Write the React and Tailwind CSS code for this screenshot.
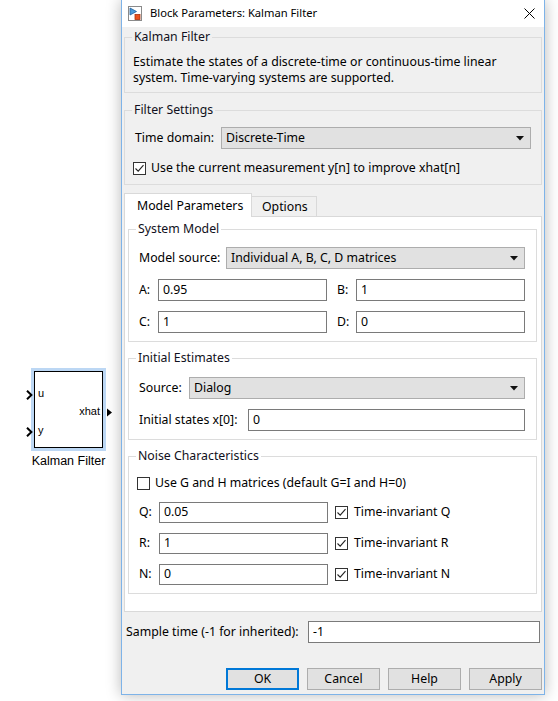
import React from "react";

function Group({ title, className = "", inner = "", children }) {
  return (
    <fieldset className={`border border-[#dcdcdc] ${className}`}>
      <legend className="ml-[7px] px-[2px] leading-[16px] text-[#101020]">{title}</legend>
      <div className={inner}>{children}</div>
    </fieldset>
  );
}

function Checkbox({ checked }) {
  return (
    <span className="w-[13px] h-[13px] shrink-0 border border-[#333] bg-white flex items-center justify-center">
      {checked && (
        <svg width="11" height="11" viewBox="0 0 11 11">
          <path d="M1.5 5.5 L4.2 8.2 L9.5 2.2" fill="none" stroke="#222" strokeWidth="1.1" />
        </svg>
      )}
    </span>
  );
}

function Select({ value, className }) {
  return (
    <div className={`h-[22px] bg-[#e1e1e1] border border-[#adadad] flex items-center pl-[4px] pr-[6px] ${className}`}>
      <span className="flex-1">{value}</span>
      <svg width="8" height="5" viewBox="0 0 8 5">
        <path d="M0 0 L8 0 L4 4.5 Z" fill="#111" />
      </svg>
    </div>
  );
}

function Input({ value, className }) {
  return (
    <div className={`h-[22px] bg-white border border-[#7a7a7a] flex items-center px-[4px] ${className}`}>
      {value}
    </div>
  );
}

function Field({ label, value, labelW = "w-[19px]" }) {
  return (
    <div className="flex items-center">
      <span className={`${labelW} shrink-0 whitespace-nowrap`}>{label}</span>
      <Input value={value} className="flex-1" />
    </div>
  );
}

function NoiseRow({ label, value, inv, className = "" }) {
  return (
    <div className={`flex items-center ${className}`}>
      <span className="w-[20px] shrink-0">{label}</span>
      <Input value={value} className="w-[169px] !h-[21px]" />
      <span className="ml-[7px] mr-[6px]">
        <Checkbox checked />
      </span>
      <span>Time-invariant {inv}</span>
    </div>
  );
}

function Button({ children, primary }) {
  return (
    <button
      className={`w-[73px] h-[22px] bg-[#e1e1e1] flex items-center justify-center ${
        primary ? "border-2 border-[#0078d7]" : "border border-[#adadad]"
      }`}
    >
      {children}
    </button>
  );
}

function SimBlock() {
  return (
    <div className="pt-[368px] pl-[31px] font-['Liberation_Sans',Arial,sans-serif]">
      <div className="w-[75px] h-[83px] bg-[#bcd7f4] p-[3px] relative">
        <div className="w-full h-full bg-white border border-black relative">
          <span className="absolute left-[3px] top-[15px] text-[11px] leading-[12px]">u</span>
          <span className="absolute left-[3px] top-[52px] text-[11px] leading-[12px]">y</span>
          <span className="absolute right-[2px] top-[33px] text-[11px] leading-[12px]">xhat</span>
        </div>
        <svg className="absolute left-[-5px] top-[22px]" width="7" height="10" viewBox="0 0 7 10">
          <path d="M1 0.7 L5.4 5 L1 9.3" fill="none" stroke="#000" strokeWidth="2" />
        </svg>
        <svg className="absolute left-[-5px] top-[59px]" width="7" height="10" viewBox="0 0 7 10">
          <path d="M1 0.7 L5.4 5 L1 9.3" fill="none" stroke="#000" strokeWidth="2" />
        </svg>
        <svg className="absolute left-[76px] top-[40px]" width="6" height="9" viewBox="0 0 6 9">
          <path d="M0 0.5 L5 4.5 L0 8.5 Z" fill="#000" />
        </svg>
      </div>
      <div className="w-[75px] text-center text-[12.5px] leading-[16px] mt-[2px] whitespace-nowrap">Kalman Filter</div>
    </div>
  );
}

export default function App() {
  return (
    <div className="w-[558px] h-[701px] bg-white flex overflow-hidden text-black">
      <div className="w-[121px] shrink-0">
        <SimBlock />
      </div>

      <div className="w-[424px] h-[695px] shrink-0 flex flex-col border-x border-b border-[#7eb3e8] bg-[#f0f0f0] shadow-[0_0_14px_rgba(0,0,0,0.28)] font-['Noto_Sans',sans-serif] text-[12.3px]">
        {/* title bar */}
        <div className="h-[27px] bg-white flex items-center pl-[6px] pr-[9px] text-[11.2px]">
          <svg width="14" height="16" viewBox="0 0 14 16">
            <rect x="0.5" y="0.5" width="13" height="14" fill="#fff" stroke="#8a8a8a" />
            <path d="M2 2 L8.5 5.5 L2 9 Z" fill="#4a9ad8" stroke="#1c5d99" strokeWidth="0.8" />
            <rect x="7" y="8.5" width="5" height="5" fill="#e8501c" stroke="#a8300c" strokeWidth="0.8" />
          </svg>
          <span className="ml-[8px] flex-1">Block Parameters: Kalman Filter</span>
          <svg width="11" height="11" viewBox="0 0 11 11">
            <path d="M0.5 0.5 L10.5 10.5 M10.5 0.5 L0.5 10.5" stroke="#000" strokeWidth="1" />
          </svg>
        </div>

        <div className="flex-1 flex flex-col px-[2px] pb-[4px]">
          <Group title="Kalman Filter" className="mt-[2px]" inner="px-[8px] pt-[9px] pb-[6px]">
            <p className="leading-[16px]">
              Estimate the states of a discrete-time or continuous-time linear
              <br />
              system. Time-varying systems are supported.
            </p>
          </Group>

          <Group title="Filter Settings" className="mt-[9px]" inner="px-[10px] pt-[9px] pb-[8px]">
            <div className="flex items-center">
              <span className="w-[86px] shrink-0">Time domain:</span>
              <Select value="Discrete-Time" className="flex-1" />
            </div>
            <div className="mt-[11px] h-[16px] flex items-center -ml-[2px]">
              <Checkbox checked />
              <span className="ml-[5px]">Use the current measurement y[n] to improve xhat[n]</span>
            </div>
          </Group>

          {/* tabs */}
          <div className="mt-[8px] flex items-end relative z-10">
            <div className="h-[24px] -mb-px w-[128px] bg-white border border-b-0 border-[#d9d9d9] pl-[12px] pt-[3px] whitespace-nowrap">
              Model Parameters
            </div>
            <div className="h-[21px] -mb-px w-[66px] -ml-px border border-b-0 border-[#d9d9d9] pl-[10px] pt-[1px]">
              Options
            </div>
          </div>
          <div className="border border-[#d9d9d9] bg-white pl-[3px] pr-[4px] pt-[4px] pb-[17px]">
            <Group title="System Model" inner="pl-[10px] pr-[11px] pt-[10px] pb-[8px]">
              <div className="flex items-center">
                <span className="w-[87px] shrink-0">Model source:</span>
                <Select value="Individual A, B, C, D matrices" className="flex-1" />
              </div>
              <div className="mt-[10px] grid grid-cols-2 gap-x-[10px] gap-y-[10px]">
                <Field label="A:" value="0.95" />
                <Field label="B:" value="1" />
                <Field label="C:" value="1" />
                <Field label="D:" value="0" />
              </div>
            </Group>

            <Group title="Initial Estimates" className="mt-[8px]" inner="pl-[10px] pr-[11px] pt-[11px] pb-[8px]">
              <div className="flex items-center">
                <span className="w-[50px] shrink-0">Source:</span>
                <Select value="Dialog" className="flex-1" />
              </div>
              <div className="mt-[10px]">
                <Field label="Initial states x[0]:" value="0" labelW="w-[109px]" />
              </div>
            </Group>

            <Group title="Noise Characteristics" className="mt-[8px]" inner="pl-[10px] pr-[11px] pt-[11px] pb-[8px]">
              <div className="h-[16px] flex items-center -ml-[2px]">
                <Checkbox />
                <span className="ml-[5px]">Use G and H matrices (default G=I and H=0)</span>
              </div>
              <NoiseRow label="Q:" value="0.05" inv="Q" className="mt-[11px]" />
              <NoiseRow label="R:" value="1" inv="R" className="mt-[10px]" />
              <NoiseRow label="N:" value="0" inv="N" className="mt-[10px]" />
            </Group>
          </div>

          <div className="mt-[9px] flex items-center pl-[2px] pr-[2px]">
            <span className="w-[182px] shrink-0 whitespace-nowrap">Sample time (-1 for inherited):</span>
            <Input value="-1" className="flex-1" />
          </div>

          <div className="mt-auto flex justify-end gap-[8px]">
            <Button primary>OK</Button>
            <Button>Cancel</Button>
            <Button>Help</Button>
            <Button>Apply</Button>
          </div>
        </div>
      </div>
    </div>
  );
}
